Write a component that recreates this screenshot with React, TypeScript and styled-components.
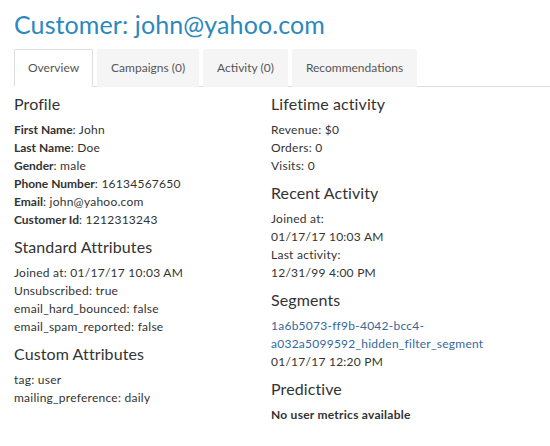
import styled, { createGlobalStyle } from 'styled-components'

const GlobalStyle = createGlobalStyle`
  body {
    margin: 0;
    background: #fff;
    font-family: Lato, "Open Sans", sans-serif;
    color: #333;
  }
`

const Page = styled.div`
  padding: 0 0 0 14px;
  width: 536px;
`

const Title = styled.h1`
  margin: 0;
  padding-top: 9px;
  font-size: 25px;
  line-height: 30px;
  font-weight: 400;
  color: #2d88bd;
  letter-spacing: 0.1px;
`

const TabBar = styled.ul`
  display: flex;
  gap: 4px;
  list-style: none;
  margin: 10px 0 0;
  padding: 0;
  border-bottom: 1px solid #ddd;
`

const Tab = styled.li<{ $active?: boolean }>`
  height: 38px;
  padding: 0 13px 2px;
  box-sizing: border-box;
  display: flex;
  align-items: center;
  font-size: 12px;
  color: #555;
  background: ${(p) => (p.$active ? '#fff' : '#f5f5f5')};
  border: 1px solid ${(p) => (p.$active ? '#ddd' : 'transparent')};
  border-bottom-color: transparent;
  margin-bottom: -1px;
  border-radius: 2px 2px 0 0;
`

const Columns = styled.div`
  display: grid;
  grid-template-columns: 257px 1fr;
  padding-top: 7px;
`

const Column = styled.div`
  display: flex;
  flex-direction: column;
`

const Heading = styled.h3`
  margin: 8px 0 7px;
  font-size: 16px;
  line-height: 20px;
  font-weight: 400;
  color: #333;
  letter-spacing: 0.1px;
  &:first-child {
    margin-top: 0;
  }
`

const Line = styled.div<{ $strong?: boolean }>`
  font-size: 12px;
  line-height: 18px;
  letter-spacing: 0.25px;
  color: #333;
  font-weight: ${(p) => (p.$strong ? 700 : 400)};
`

const Label = styled.b`
  font-weight: 700;
  letter-spacing: 0;
`

const SegmentLink = styled.a`
  display: block;
  font-size: 12px;
  line-height: 18px;
  letter-spacing: 0.25px;
  color: #35689c;
  text-decoration: none;
`

const profile: [string, string][] = [
  ['First Name', 'John'],
  ['Last Name', 'Doe'],
  ['Gender', 'male'],
  ['Phone Number', '16134567650'],
  ['Email', 'john@yahoo.com'],
  ['Customer Id', '1212313243'],
]

const standard = [
  'Joined at: 01/17/17 10:03 AM',
  'Unsubscribed: true',
  'email_hard_bounced: false',
  'email_spam_reported: false',
]

const custom = ['tag: user', 'mailing_preference: daily']

export default function App() {
  return (
    <>
      <GlobalStyle />
      <Page>
        <Title>Customer: john@yahoo.com</Title>
        <TabBar>
          <Tab $active>Overview</Tab>
          <Tab>Campaigns (0)</Tab>
          <Tab>Activity (0)</Tab>
          <Tab>Recommendations</Tab>
        </TabBar>
        <Columns>
          <Column>
            <Heading>Profile</Heading>
            {profile.map(([k, v]) => (
              <Line key={k}>
                <Label>{k}</Label>: {v}
              </Line>
            ))}
            <Heading>Standard Attributes</Heading>
            {standard.map((s) => (
              <Line key={s}>{s}</Line>
            ))}
            <Heading>Custom Attributes</Heading>
            {custom.map((s) => (
              <Line key={s}>{s}</Line>
            ))}
          </Column>
          <Column>
            <Heading>Lifetime activity</Heading>
            <Line>Revenue: $0</Line>
            <Line>Orders: 0</Line>
            <Line>Visits: 0</Line>
            <Heading>Recent Activity</Heading>
            <Line>Joined at:</Line>
            <Line>01/17/17 10:03 AM</Line>
            <Line>Last activity:</Line>
            <Line>12/31/99 4:00 PM</Line>
            <Heading>Segments</Heading>
            <SegmentLink href="#">
              1a6b5073-ff9b-4042-bcc4-
              <br />
              a032a5099592_hidden_filter_segment
            </SegmentLink>
            <Line>01/17/17 12:20 PM</Line>
            <Heading>Predictive</Heading>
            <Line $strong>No user metrics available</Line>
          </Column>
        </Columns>
      </Page>
    </>
  )
}
